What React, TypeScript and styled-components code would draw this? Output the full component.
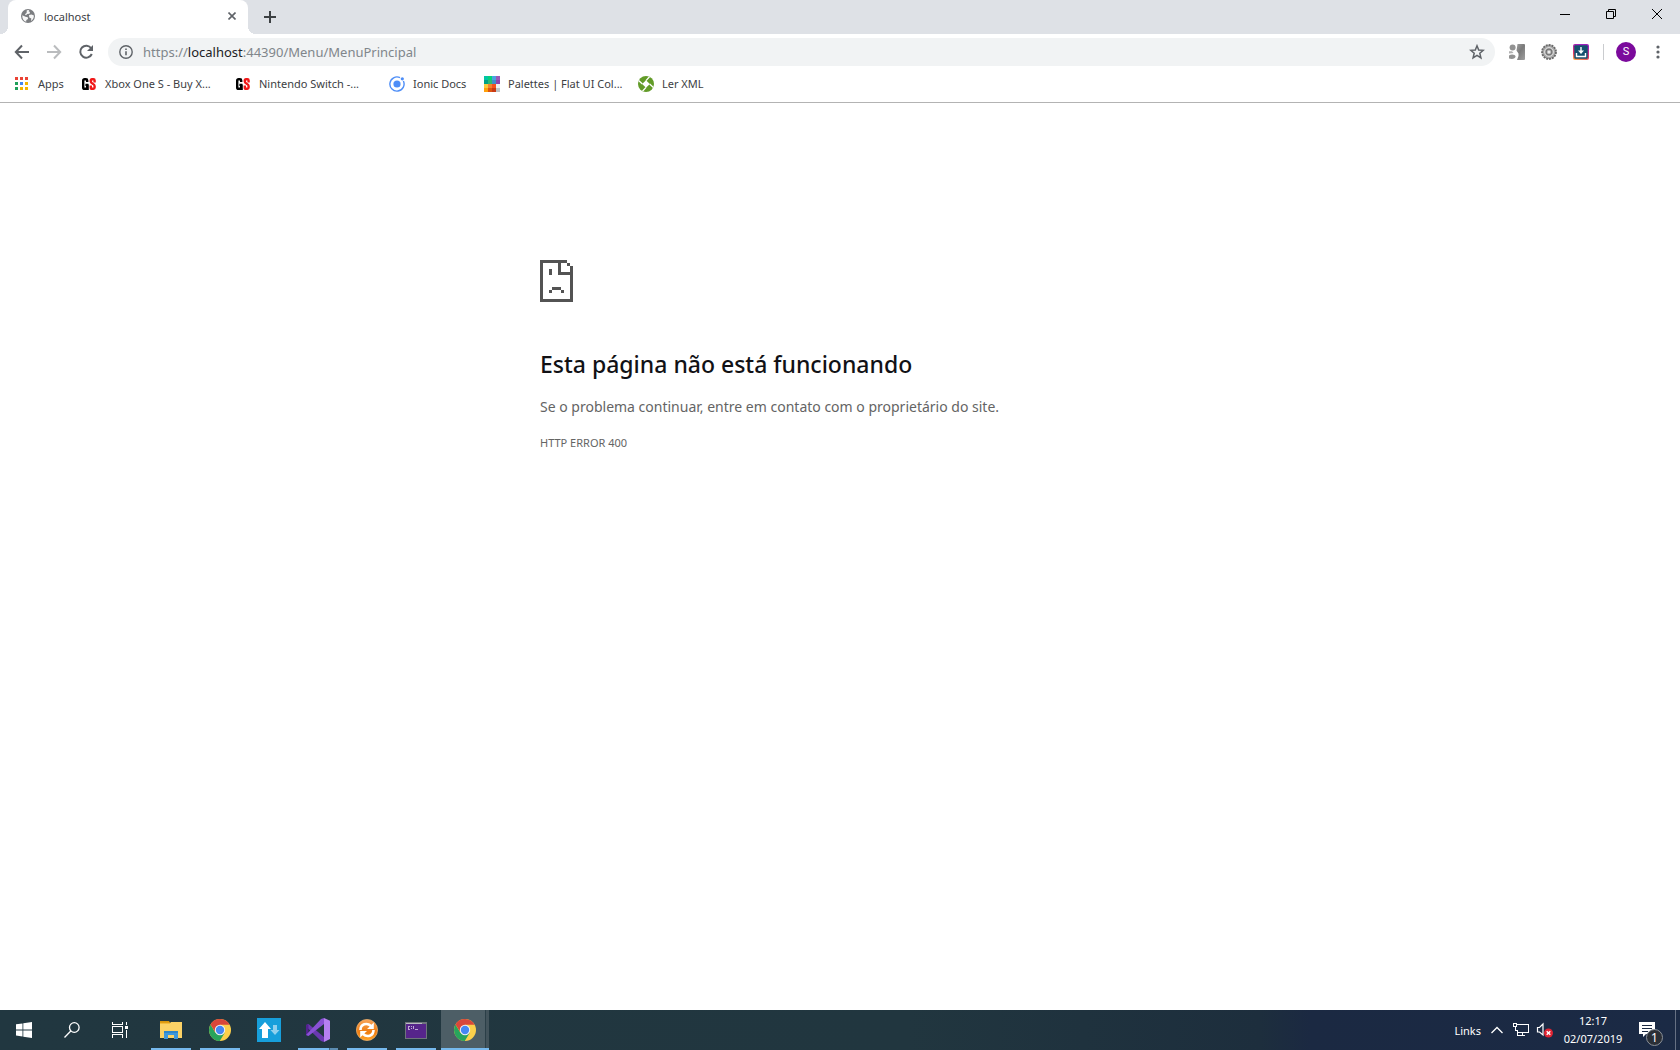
import React from "react";
import styled, { createGlobalStyle } from "styled-components";

const Global = createGlobalStyle`
  * { box-sizing: border-box; }
  html, body { margin: 0; }
  body { font-family: "Segoe UI", "Noto Sans", "Open Sans", sans-serif; font-size: 12px; background: #fff; }
  button, input { font: inherit; border: 0; background: none; padding: 0; margin: 0; }
  svg { display: block; flex: none; }
`;

const Screen = styled.div`
  min-height: 100vh;
  display: flex;
  flex-direction: column;
`;

const TabStrip = styled.header`
  display: flex;
  height: 34px;
  background: #dee1e6;
  padding-left: 8px;
`;

const Tab = styled.div`
  position: relative;
  display: flex;
  align-items: center;
  width: 240px;
  padding: 0 8px 2px 12px;
  background: #fff;
  border-radius: 8px 8px 0 0;
  color: #3c4043;
  font-size: 11px;
  &::before, &::after {
    content: "";
    position: absolute;
    bottom: 0;
    width: 8px;
    height: 8px;
  }
  &::before { left: -8px; background: radial-gradient(circle at 0 0, transparent 8px, #fff 8px); }
  &::after { right: -8px; background: radial-gradient(circle at 100% 0, transparent 8px, #fff 8px); }
`;

const TabTitle = styled.span`
  flex: 1;
  padding-left: 8px;
`;

const IconButton = styled.button<{ $w?: number; $h?: number }>`
  display: flex;
  align-items: center;
  justify-content: center;
  flex: none;
  width: ${(p) => p.$w ?? 32}px;
  height: ${(p) => p.$h ?? 28}px;
`;

const NewTab = styled(IconButton)`
  margin: 3px 0 0 8px;
`;

const WindowControls = styled.div`
  display: flex;
  margin-left: auto;
`;

const Toolbar = styled.nav`
  display: flex;
  align-items: center;
  height: 36px;
  padding: 0 6px;
`;

const Omnibox = styled.div`
  display: flex;
  align-items: center;
  flex: 1;
  height: 28px;
  margin: 0 6px;
  padding-left: 1px;
  border-radius: 14px;
  background: #f1f3f4;
  color: #80868b;
  font-size: 13px;
`;

const Address = styled.a`
  flex: 1;
  color: inherit;
  text-decoration: none;
  b { font-weight: 400; color: #202124; }
`;

const Divider = styled.span`
  width: 1px;
  height: 16px;
  margin: 0 6px;
  background: #cacccf;
`;

const Avatar = styled.span`
  display: grid;
  place-items: center;
  width: 20px;
  height: 20px;
  border-radius: 50%;
  background: #7b0a9c;
  color: #fff;
  font: 11px/20px Roboto, sans-serif;
`;

const Bookmarks = styled.nav`
  display: flex;
  align-items: center;
  height: 33px;
  padding: 0 0 4px 14px;
  border-bottom: 1px solid #b3b3b3;
`;

const Bookmark = styled.a<{ $w: number }>`
  display: flex;
  align-items: center;
  gap: 8px;
  width: ${(p) => p.$w}px;
  color: #3c4043;
  font-size: 11px;
  line-height: 16px;
  text-decoration: none;
  white-space: nowrap;
`;

const Page = styled.main`
  flex: 1;
  width: 100%;
  max-width: 600px;
  margin: 0 auto;
  padding-top: 157px;
  color: #646464;
`;

const Title = styled.h1`
  margin: 46px 0 15px;
  color: #111115;
  font-size: 23px;
  font-weight: 500;
  line-height: 32px;
`;

const Message = styled.p`
  margin: 0 0 12px;
  font-size: 14px;
  line-height: 24px;
`;

const ErrorCode = styled.p`
  margin: 0;
  font-size: 11px;
  line-height: 24px;
`;

const Taskbar = styled.footer`
  display: flex;
  height: 40px;
  background: linear-gradient(90deg, #213740 0%, #21363f 54%, #1d2e3d 75%, #1b2942 78%, #1b2a45 100%);
  color: #fff;
`;

const Apps = styled.div`
  display: flex;
  margin-left: 3px;
`;

const AppButton = styled.button<{ $open?: boolean; $active?: boolean; $stacked?: boolean }>`
  position: relative;
  display: flex;
  align-items: center;
  justify-content: center;
  width: 49px;
  height: 40px;
  padding-right: 2px;
  background: ${(p) =>
    p.$active ? "linear-gradient(90deg, #4d5e66 44px, #2b3f48 44px, #2b3f48 45px, #42535b 45px, #42535b 48px, transparent 48px)" : "none"};
  &::after {
    content: "";
    position: absolute;
    bottom: 0;
    left: ${(p) => (p.$active ? 0 : 4)}px;
    right: ${(p) => (p.$active ? 1 : 5)}px;
    height: 2px;
    background: ${(p) =>
      p.$stacked
        ? "linear-gradient(90deg, #76b9ed 31px, #41647d 31px, #41647d 32px, #5c8db2 32px)"
        : p.$open ? "#76b9ed" : "transparent"};
  }
`;

const Tray = styled.div`
  display: flex;
  align-items: center;
  margin-left: auto;
`;

const TrayButton = styled(IconButton)`
  color: #fff;
`;

const Links = styled.span`
  font-size: 11px;
  padding-right: 4px;
`;

const Clock = styled.time`
  display: flex;
  flex-direction: column;
  width: 72px;
  text-align: center;
  font-size: 11px;
  line-height: 18px;
`;

const Notifications = styled(TrayButton)`
  position: relative;
  margin-right: 10px;
`;

const Count = styled.span`
  position: absolute;
  left: 17px;
  top: 19px;
  width: 17px;
  height: 17px;
  border: 1px solid #8b9199;
  border-radius: 50%;
  background: #2b2f36;
  font-size: 12px;
  line-height: 15px;
  text-align: center;
`;

const ShowDesktop = styled.button`
  width: 5px;
  height: 40px;
  border-left: 1px solid #667083;
`;

const Stroke = ({ d, size = 16, color = "#5f6368", width = 2 }: { d: string; size?: number; color?: string; width?: number }) => (
  <svg width={size} height={size} viewBox={`0 0 ${size} ${size}`} fill="none" stroke={color} strokeWidth={width}>
    <path d={d} />
  </svg>
);

const Globe = () => (
  <svg width="16" height="16" viewBox="0 0 16 16">
    <circle cx="8" cy="8" r="7" fill="#7b7d80" />
    <path d="M2.3 7.2 5.5 8.8 7.8 9.2 8 11 6.3 12 6.2 13.8C3.6 13 2 10.5 2.3 7.2ZM6.8 2.2 9.3 2 8.6 3.2 10 4.1 9.5 5.7 7.2 6 6 7.2 4.9 6.2 6.6 5ZM9 7 11.5 6.6 13.9 7.6C14 10 12.8 12 11 13L11.3 10.5 9.3 9.5Z" fill="#f7f7f7" />
  </svg>
);

const Reload = () => (
  <svg width="16" height="16" viewBox="0 0 16 16">
    <path d="M13.2 4.2A6 6 0 1 0 13.8 10" fill="none" stroke="#5f6368" strokeWidth="2" />
    <path d="M15 1v6H9Z" fill="#5f6368" />
  </svg>
);

const Info = () => (
  <svg width="16" height="16" viewBox="0 0 16 16">
    <circle cx="8" cy="8" r="6.2" fill="none" stroke="#5f6368" strokeWidth="1.4" />
    <path d="M7.2 7.2h1.6v4H7.2ZM7.2 4.5h1.6v1.6H7.2Z" fill="#5f6368" />
  </svg>
);

const Translate = () => (
  <svg width="16" height="16" viewBox="0 0 16 16">
    <defs>
      <linearGradient id="tr" x2="1" y2="1"><stop stopColor="#a8a8a8" /><stop offset=".5" stopColor="#7a7a7a" /><stop offset="1" stopColor="#a0a0a0" /></linearGradient>
    </defs>
    <path d="M5 0H15Q16 0 16 1V15Q16 16 15 16H5Z" fill="url(#tr)" />
    <path d="M0 0H6L8.5 0 7.5 6.5 9.5 9.5V12L8 16H0Z" fill="#fff" />
    <circle cx="3.6" cy="3.4" r="3" fill="#929292" />
    <path d="M0 11.5C2 9.8 6.5 10.2 6.5 12.6S3 15.6 0 14.6Z" fill="#929292" />
    <path d="M0 7.2H3L4.5 9 0 9.4Z" fill="#b0b0b0" />
  </svg>
);

const Gear = () => (
  <svg width="16" height="16" viewBox="0 0 16 16">
    <circle cx="8" cy="8" r="6.9" fill="#a2a2a2" stroke="#6a6a6a" strokeWidth="2" strokeDasharray="2 .9" />
    <circle cx="8" cy="8" r="6" fill="#a8a8a8" />
    <circle cx="8" cy="8" r="4.5" fill="none" stroke="#dcdcdc" />
    <circle cx="8" cy="8" r="2.9" fill="none" stroke="#6f6f6f" />
    <circle cx="8" cy="8" r="1.5" fill="#eee" />
  </svg>
);

const Downloader = () => (
  <svg width="16" height="16" viewBox="0 0 16 16">
    <defs>
      <linearGradient id="dl" x1="0" y1="1" x2="0.3" y2="0">
        <stop stopColor="#fdb54a" /><stop offset=".4" stopColor="#e63a62" /><stop offset="1" stopColor="#9c21bd" />
      </linearGradient>
    </defs>
    <rect width="16" height="16" rx="2" fill="url(#dl)" />
    <rect x="1.3" y="1.3" width="13.4" height="13.4" rx="1" fill="#14506f" />
    <path d="M8 3v5M3.5 9v3.5h9V9" stroke="#fff" strokeWidth="1.4" fill="none" />
    <path d="M5 6.5h6L8 10Z" fill="#fff" />
  </svg>
);

const appColors = ["#ea4335", "#ea4335", "#ea4335", "#1fa05a", "#4285f4", "#f4b400", "#1fa05a", "#f4b400", "#f4b400"];
const AppsGrid = () => (
  <svg width="16" height="16" viewBox="0 0 16 16">
    {appColors.map((c, i) => <rect key={i} x={1 + (i % 3) * 5} y={1 + Math.floor(i / 3) * 5} width="3" height="3" fill={c} />)}
  </svg>
);

const GameSpot = () => (
  <svg width="16" height="16" viewBox="0 0 16 16" fill="none" strokeWidth="2.4">
    <path d="M6.2 6V4.4Q6.2 3.2 4.9 3.2H3.6Q2.2 3.2 2.2 4.6V11.4Q2.2 12.8 3.6 12.8H4.4Q6.2 12.8 6.2 11.4V8.9H4.4M6.6 8.6V14" stroke="#000" />
    <path d="M13.6 6.4V4.4Q13.6 3.2 12.4 3.2H11Q9.8 3.2 9.8 4.6V5.6Q9.8 6.8 11.7 7.8T13.6 10V11.6Q13.6 12.8 12.4 12.8H11Q9.8 12.8 9.8 11.4V9.6" stroke="#f01818" />
  </svg>
);

const Ionic = () => (
  <svg width="16" height="16" viewBox="0 0 16 16">
    <circle cx="8" cy="8" r="3.6" fill="#4e8ef7" />
    <path d="M11 1.6A7.1 7.1 0 1 0 14.4 5" fill="none" stroke="#4e8ef7" strokeWidth="1.4" />
    <circle cx="13.3" cy="2.8" r="1.6" fill="#4e8ef7" />
  </svg>
);

const paletteColors = [
  "#00c6a5", "#06d078", "#4aa3df", "#9b59b6", "#00a085", "#2eb872", "#3f8fc8", "#8e44ad",
  "#f9ca3c", "#f08330", "#f4511e", "#ecf0f1", "#ff9f0a", "#dd5510", "#c93a14", "#bdc3c7",
];
const Palette = () => (
  <svg width="16" height="16" viewBox="0 0 16 16" shapeRendering="crispEdges">
    {paletteColors.map((c, i) => <rect key={i} x={(i % 4) * 4} y={Math.floor(i / 4) * 4} width="4" height="4" fill={c} />)}
  </svg>
);

const XmlReader = () => (
  <svg width="16" height="16" viewBox="0 0 16 16">
    <circle cx="8" cy="8" r="8" fill="#629b28" />
    <path d="M8 4.2 11.8 8 8 11.8 4.2 8Z" fill="#fff" />
    <path d="M11.5 .8 8 4.6M15.4 11.4 11.6 8M4.5 15.2 8 11.4M.6 4.6 4.4 8" stroke="#fff" strokeWidth="1.3" />
  </svg>
);

const SadFile = () => (
  <svg width="33" height="42" viewBox="0 0 11 14" fill="#535353" shapeRendering="crispEdges">
    <path d="M0 0H9V1H1V13H10V5H6V1H7V4H10V2H11V14H0ZM9 1H10V2H9ZM3 3H4V5H3ZM4 9H7V10H4ZM3 10H4V11H3ZM7 10H8V11H7Z" />
  </svg>
);

const Windows = () => (
  <svg width="16" height="16" viewBox="0 0 16 16" fill="#fff">
    <path d="M0 2.3 6.5 1.4V7.5H0ZM7.3 1.2 16 0V7.5H7.3ZM0 8.4H6.5V14.5L0 13.6ZM7.3 8.4H16V16L7.3 14.7Z" />
  </svg>
);

const TaskView = () => (
  <svg width="16" height="16" viewBox="0 0 16 16" fill="none" stroke="#fff" shapeRendering="crispEdges">
    <path d="M.5 0V2.5H10.5V0M.5 16V12.5H10.5V16M.5 4.5H10.5V10.5H.5ZM14.5 0V3M14.5 8V16" />
    <path d="M13 4h3v3h-3Z" fill="#fff" stroke="none" />
  </svg>
);

const Explorer = () => (
  <svg width="22" height="20" viewBox="0 0 22 20">
    <path d="M0 1H9L10 3H0Z" fill="#d9960c" />
    <path d="M0 3 10 3 11 2H22V18H0Z" fill="#fcd266" />
    <path d="M0 3H10" stroke="#e8a317" />
    <path d="M4 19V12Q4 11 5 11H17Q18 11 18 12V19H14V15H8V19Z" fill="#3e97dc" />
    <path d="M4 11H18V13H4Z" fill="#2e86cb" />
  </svg>
);

const Chrome = () => (
  <svg width="22" height="22" viewBox="0 0 22 22">
    <circle cx="11" cy="11" r="11" fill="#fcd04b" />
    <path d="M11 11 6.4 13.7 1.5 5.5A11 11 0 0 0 10.8 22L15.7 13.7Z" fill="#28a45c" />
    <path d="M1.5 5.5 6.2 13 11 11V5.7H20.6A11 11 0 0 0 1.5 5.5Z" fill="#d9473a" />
    <circle cx="11" cy="11" r="5.2" fill="#f3f3f3" />
    <circle cx="11" cy="11" r="4.2" fill="#4587f3" />
  </svg>
);

const Transfer = () => (
  <svg width="24" height="24" viewBox="0 0 24 24">
    <rect width="24" height="24" fill="#179fdb" />
    <path d="M8 4 14 11H11V20H5V11H2Z" fill="#fff" />
    <path d="M16 7H20V12H22.5L18 17 13.5 12H16Z" fill="#91d0ed" />
  </svg>
);

const VisualStudio = () => (
  <svg width="24" height="24" viewBox="0 0 24 24">
    <path d="M0 7 2.5 6 18 19V24L15 23 0 8.5Z" fill="#6a38b0" />
    <path d="M0 7 2.5 6V18L0 17Z" fill="#52218f" />
    <path d="M0 17 15 1 18 0V6L2.5 18Z" fill="#8951d5" />
    <path d="M18 0 24 2.8V21L18 24Z" fill="#b67ff2" />
  </svg>
);

const Sync = () => (
  <svg width="22" height="22" viewBox="0 0 22 22">
    <defs><linearGradient id="sync" x2="0" y2="1"><stop stopColor="#f7a45b" /><stop offset=".6" stopColor="#ef7d12" /><stop offset="1" stopColor="#ffa62a" /></linearGradient></defs>
    <circle cx="11" cy="11" r="10.6" fill="url(#sync)" stroke="#f2b36d" strokeWidth=".7" />
    <path d="M4.5 11C4.5 5 11 3.2 15 7M17.5 11C17.5 17 11 18.8 7 15" stroke="#fff" strokeWidth="2.6" fill="none" />
    <path d="M17.8 3.5V10H11ZM4.2 18.5V12H11Z" fill="#fff" />
  </svg>
);

const Console = () => (
  <svg width="22" height="17" viewBox="0 0 22 17" shapeRendering="crispEdges">
    <path d="M0 0H22V17H0Z" fill="#6f747c" />
    <path d="M1 2H21V16H1Z" fill="#56258b" />
    <path d="M1 1H17V2H1Z" fill="#b9bcc1" />
    <path d="M5 4H3V7H5M6 4V5M6 6V7M8 4 9 7M10 7H13" stroke="#bda9d4" fill="none" />
  </svg>
);

const Network = () => (
  <svg width="16" height="16" viewBox="0 0 16 16" fill="none" stroke="#fff" shapeRendering="crispEdges">
    <path d="M4 2.5H15.5V10.5H4.5M.5 1.5H3.5V4.5H.5ZM2.5 5V8.5H4.5V13.5H12M9.5 11V13" />
  </svg>
);

const Muted = () => (
  <svg width="18" height="16" viewBox="0 0 18 16">
    <path d="M1.5 5.5H3.5L7 2V13L3.5 10H1.5Z" fill="none" stroke="#fff" strokeWidth="1.2" />
    <circle cx="12.5" cy="11" r="4.5" fill="#e02433" />
    <path d="M10.7 9.2 14.3 12.8M14.3 9.2 10.7 12.8" stroke="#fff" strokeWidth="1.4" />
  </svg>
);

const Note = () => (
  <svg width="16" height="16" viewBox="0 0 16 16">
    <path d="M0 0H16V12H7L4 15V12H0Z" fill="#fff" />
    <path d="M3 3.5H13M3 6.5H13M3 9.5H9" stroke="#1b2942" shapeRendering="crispEdges" />
  </svg>
);

const bookmarks = [
  { label: "Apps", width: 67, icon: <AppsGrid /> },
  { label: "Xbox One S - Buy X...", width: 154, icon: <GameSpot /> },
  { label: "Nintendo Switch -...", width: 154, icon: <GameSpot /> },
  { label: "Ionic Docs", width: 95, icon: <Ionic /> },
  { label: "Palettes | Flat UI Col...", width: 154, icon: <Palette /> },
  { label: "Ler XML", width: 80, icon: <XmlReader /> },
];

export default function App() {
  return (
    <Screen>
      <Global />
      <TabStrip>
        <Tab>
          <Globe />
          <TabTitle>localhost</TabTitle>
          <IconButton $w={16} aria-label="Close tab"><Stroke size={8} width={1.6} d="M.5.5 7.5 7.5M7.5.5.5 7.5" /></IconButton>
        </Tab>
        <NewTab $w={28} aria-label="New tab"><Stroke size={12} color="#3c4043" d="M6 0V12M0 6H12" /></NewTab>
        <WindowControls>
          <IconButton $w={46} aria-label="Minimize"><Stroke size={10} width={1} color="#000" d="M0 5.5H10" /></IconButton>
          <IconButton $w={46} aria-label="Restore"><Stroke size={10} width={1} color="#000" d="M.5 2.5H7.5V9.5H.5ZM2.5 2.5V.5H9.5V7.5H7.5" /></IconButton>
          <IconButton $w={46} aria-label="Close"><Stroke size={10} width={1} color="#000" d="M0 0 10 10M10 0 0 10" /></IconButton>
        </WindowControls>
      </TabStrip>

      <Toolbar>
        <IconButton aria-label="Back"><Stroke d="M15 8H2.5M8 1.5 1.8 8 8 14.5" /></IconButton>
        <IconButton aria-label="Forward"><Stroke color="#babcbe" d="M1 8H13.5M8 1.5 14.2 8 8 14.5" /></IconButton>
        <IconButton aria-label="Reload"><Reload /></IconButton>
        <Omnibox>
          <IconButton $w={34} aria-label="Site information"><Info /></IconButton>
          <Address href="#">https://<b>localhost</b>:44390/Menu/MenuPrincipal</Address>
          <IconButton $w={36} aria-label="Bookmark this page">
            <Stroke width={1.5} d="M8 1.8 9.7 6 14.3 6.3 10.8 9.3 11.9 13.8 8 11.3 4.1 13.8 5.2 9.3 1.7 6.3 6.3 6Z" />
          </IconButton>
        </Omnibox>
        <IconButton aria-label="Translate"><Translate /></IconButton>
        <IconButton aria-label="Settings extension"><Gear /></IconButton>
        <IconButton aria-label="Downloader"><Downloader /></IconButton>
        <Divider />
        <IconButton aria-label="Profile"><Avatar>S</Avatar></IconButton>
        <IconButton aria-label="Menu">
          <svg width="4" height="14" viewBox="0 0 4 14" fill="#5f6368"><circle cx="2" cy="2" r="1.6" /><circle cx="2" cy="7" r="1.6" /><circle cx="2" cy="12" r="1.6" /></svg>
        </IconButton>
      </Toolbar>

      <Bookmarks>
        {bookmarks.map((b) => (
          <Bookmark key={b.label} href="#" $w={b.width}>{b.icon}{b.label}</Bookmark>
        ))}
      </Bookmarks>

      <Page>
        <SadFile />
        <Title>Esta página não está funcionando</Title>
        <Message>Se o problema continuar, entre em contato com o proprietário do site.</Message>
        <ErrorCode>HTTP ERROR 400</ErrorCode>
      </Page>

      <Taskbar>
        <TrayButton $w={48} $h={40} aria-label="Start"><Windows /></TrayButton>
        <TrayButton $w={48} $h={40} aria-label="Search">
          <svg width="16" height="16" viewBox="0 0 16 16" fill="none" stroke="#fff" strokeWidth="1.3"><circle cx="10.3" cy="5.5" r="4.8" /><path d="M6.8 9 .5 15.5" /></svg>
        </TrayButton>
        <TrayButton $w={48} $h={40} aria-label="Task view"><TaskView /></TrayButton>
        <Apps>
          <AppButton $open aria-label="File Explorer"><Explorer /></AppButton>
          <AppButton $open aria-label="Chrome"><Chrome /></AppButton>
          <AppButton aria-label="Transfer"><Transfer /></AppButton>
          <AppButton $open $stacked aria-label="Visual Studio"><VisualStudio /></AppButton>
          <AppButton $open aria-label="Sync"><Sync /></AppButton>
          <AppButton $open aria-label="Console"><Console /></AppButton>
          <AppButton $open $active aria-label="Chrome window"><Chrome /></AppButton>
        </Apps>
        <Tray>
          <Links>Links</Links>
          <TrayButton $w={24} $h={40} aria-label="Show hidden icons"><Stroke size={12} width={1.3} color="#fff" d="M.5 9 6 3.5 11.5 9" /></TrayButton>
          <TrayButton $w={24} $h={40} aria-label="Network"><Network /></TrayButton>
          <TrayButton $w={24} $h={40} aria-label="Volume"><Muted /></TrayButton>
          <Clock><span>12:17</span><span>02/07/2019</span></Clock>
          <Notifications $w={36} $h={40} aria-label="Notifications"><Note /><Count>1</Count></Notifications>
          <ShowDesktop aria-label="Show desktop" />
        </Tray>
      </Taskbar>
    </Screen>
  );
}
